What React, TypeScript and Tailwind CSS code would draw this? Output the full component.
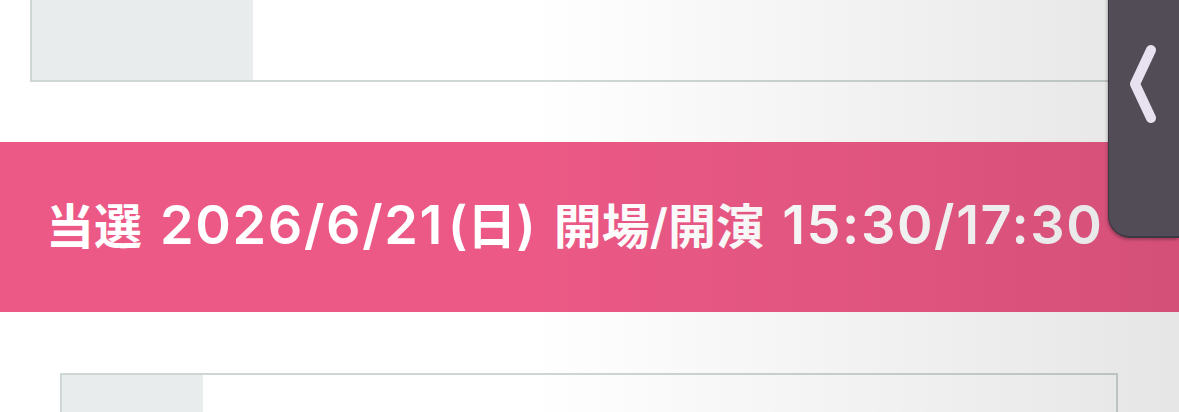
import React from 'react';

const App: React.FC = () => {
  return (
    <div className="relative h-[412px] w-[1179px] overflow-hidden bg-white" style={{ fontFamily: 'Inter, "Noto Sans CJK JP", "Noto Sans", sans-serif' }}>
      {/* upper table row */}
      <div className="ml-[30px] flex h-[82px] w-[1130px] border-2 border-t-0 border-[#cfd6d6] bg-white">
        <div className="w-[221px] bg-[#e8ecec]"></div>
      </div>

      {/* result banner */}
      <div className="mt-[60px] flex h-[170px] items-center bg-[#ec5986] pb-[4px] pl-[46px]">
        <p className="whitespace-nowrap text-[48px] font-semibold leading-none text-white [word-spacing:6px]">
          当選 <span className="text-[54px] tracking-[1.6px]">2026/6/21</span><span className="ml-[4px] text-[52px]">(<span className="text-[49px]">日</span>)</span> 開場/開演 <span className="text-[54px] tracking-[1.6px]">15:30/17:30</span>
        </p>
      </div>

      {/* lower table row */}
      <div className="ml-[60px] mt-[61px] flex h-[60px] w-[1058px] border-2 border-b-0 border-[#cfd6d6] bg-white">
        <div className="w-[141px] bg-[#e8ecec]"></div>
      </div>

      {/* shade from the side drawer */}
      <div className="pointer-events-none absolute inset-0 bg-gradient-to-r from-transparent from-45% to-black/10"></div>

      {/* drawer tab */}
      <div className="absolute right-0 top-[-20px] flex h-[258px] w-[71px] items-start justify-center rounded-bl-[22px] border-b-2 border-l border-[#3d3942] bg-[#514c55] pt-[64px] shadow-[-1px_2px_3px_rgba(0,0,0,0.25)]">
        <svg width="32" height="84" viewBox="0 0 32 84" className="ml-[1px]">
          <path d="M22 6 L6 40 L22 74" fill="none" stroke="#e7e1f0" strokeWidth="10" strokeLinecap="round" strokeLinejoin="round" />
        </svg>
      </div>
    </div>
  );
};

export default App;
